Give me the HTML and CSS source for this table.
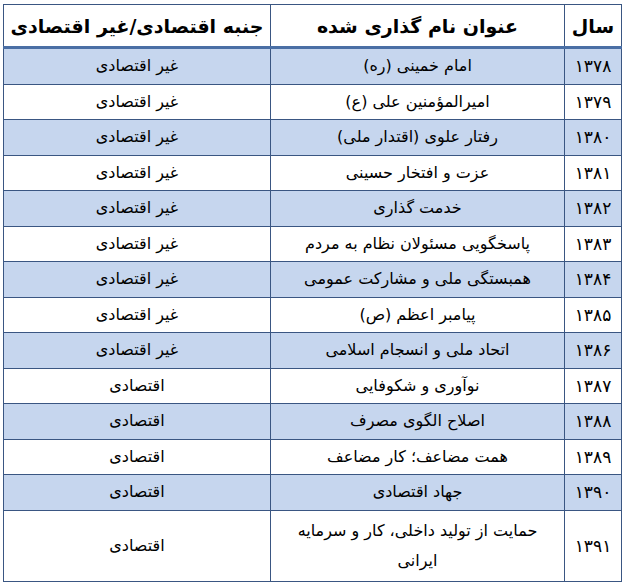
FILE: index.html
```html
<!DOCTYPE html>
<html lang="fa" dir="rtl">
<head>
<meta charset="utf-8">
<link rel="stylesheet" href="styles.css">
</head>
<body>
<table class="tbl">
  <colgroup>
    <col class="c-year">
    <col class="c-title">
    <col class="c-type">
  </colgroup>
  <thead>
    <tr><th>سال</th><th>عنوان نام گذاری شده</th><th>جنبه اقتصادی/غیر اقتصادی</th></tr>
  </thead>
  <tbody>
    <tr class="alt"><td>۱۳۷۸</td><td>امام خمینی (ره)</td><td>غیر اقتصادی</td></tr>
    <tr><td>۱۳۷۹</td><td>امیرالمؤمنین علی (ع)</td><td>غیر اقتصادی</td></tr>
    <tr class="alt"><td>۱۳۸۰</td><td>رفتار علوی (اقتدار ملی)</td><td>غیر اقتصادی</td></tr>
    <tr><td>۱۳۸۱</td><td>عزت و افتخار حسینی</td><td>غیر اقتصادی</td></tr>
    <tr class="alt"><td>۱۳۸۲</td><td>خدمت گذاری</td><td>غیر اقتصادی</td></tr>
    <tr><td>۱۳۸۳</td><td>پاسخگویی مسئولان نظام به مردم</td><td>غیر اقتصادی</td></tr>
    <tr class="alt"><td>۱۳۸۴</td><td>همبستگی ملی و مشارکت عمومی</td><td>غیر اقتصادی</td></tr>
    <tr><td>۱۳۸۵</td><td>پیامبر اعظم (ص)</td><td>غیر اقتصادی</td></tr>
    <tr class="alt"><td>۱۳۸۶</td><td>اتحاد ملی و انسجام اسلامی</td><td>غیر اقتصادی</td></tr>
    <tr><td>۱۳۸۷</td><td>نوآوری و شکوفایی</td><td>اقتصادی</td></tr>
    <tr class="alt"><td>۱۳۸۸</td><td>اصلاح الگوی مصرف</td><td>اقتصادی</td></tr>
    <tr><td>۱۳۸۹</td><td>همت مضاعف؛ کار مضاعف</td><td>اقتصادی</td></tr>
    <tr class="alt"><td>۱۳۹۰</td><td>جهاد اقتصادی</td><td>اقتصادی</td></tr>
    <tr class="tall"><td>۱۳۹۱</td><td>حمایت از تولید داخلی، کار و سرمایه<br>ایرانی</td><td>اقتصادی</td></tr>
  </tbody>
</table>
</body>
</html>
```
FILE: styles.css
```css
html, body {
  margin: 0;
  padding: 0;
  background: #ffffff;
}
body {
  padding: 4px 2px 0 4px;
  font-family: "DejaVu Sans", "Noto Sans", sans-serif;
  color: #000000;
}
.tbl {
  direction: rtl;
  border-collapse: collapse;
  width: 618px;
  table-layout: fixed;
}
.c-year { width: 57px; }
.c-title { width: 294px; }
.c-type { width: 267px; }
.tbl th, .tbl td {
  border: 1px solid #3a5682;
  text-align: center;
  vertical-align: middle;
  padding: 0 4px;
}
.tbl th {
  height: 41px;
  line-height: 24px;
  font-size: 19px;
  font-weight: bold;
  border-bottom: 3px solid #4a6fa5;
  color: #000;
}
.tbl td {
  height: 34.5px;
  line-height: 22px;
  font-size: 16px;
}
.tbl tr.alt td {
  background: #c6d6ee;
}
.tbl tr.tall td {
  height: 70px;
  line-height: 30px;
}
.tbl td:first-child {
  font-size: 17px;
}
```
